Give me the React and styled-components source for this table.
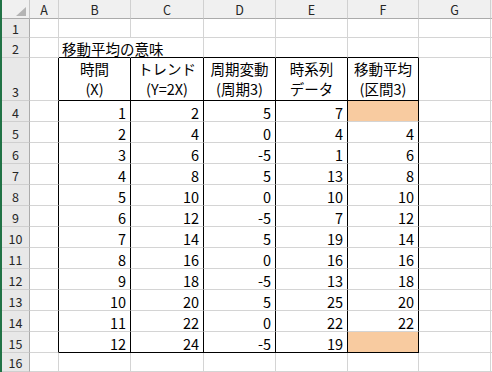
import React from "react";
import styled, { createGlobalStyle } from "styled-components";

const GlobalStyle = createGlobalStyle`
  html, body {
    margin: 0;
    padding: 0;
    background: #ffffff;
    overflow: hidden;
  }
  body {
    font-family: "Noto Sans CJK JP", "Noto Sans", sans-serif;
    color: #000000;
  }
`;

const GRID = "#d4d4d4";
const INK = "#000000";
const PEACH = "#f8cba0";

const COLUMNS = ["A", "B", "C", "D", "E", "F", "G", ""];
const COL_WIDTHS = [29, 72, 73, 72, 72, 71, 72, 60];
const ROW_HEIGHTS = [19, 20, 43, ...Array(12).fill(21), 19, 19];
const LAST_LABELLED_ROW = 16;

// B..F columns of the moving-average table
const heads = [
  ["時間", "(X)"],
  ["トレンド", "(Y=2X)"],
  ["周期変動", "(周期3)"],
  ["時系列", "データ"],
  ["移動平均", "(区間3)"],
];

const series = [7, 4, 1, 13, 10, 7, 19, 16, 13, 25, 22, 19];
const cycle = [5, 0, -5];
const data = series.map((y, i) => ({
  x: i + 1,
  trend: 2 * (i + 1),
  wave: cycle[i % 3],
  y,
  avg: i === 0 || i === series.length - 1 ? null : (series[i - 1] + y + series[i + 1]) / 3,
}));

const Window = styled.div`
  height: 372px;
  border-left: 2px solid #217346;
  overflow: hidden;
`;

const Sheet = styled.div`
  display: grid;
  grid-template-columns: 28px ${COL_WIDTHS.map((w) => `${w}px`).join(" ")};
  grid-template-rows: 19px ${ROW_HEIGHTS.map((h) => `${h}px`).join(" ")};
`;

const Corner = styled.div`
  position: relative;
  background: #f0f0f0;
  border-right: 1px solid #c6c6c6;
  border-bottom: 1px solid #ababab;

  &::after {
    content: "";
    position: absolute;
    right: 3px;
    bottom: 2px;
    width: 0;
    height: 0;
    border-left: 10px solid transparent;
    border-bottom: 9px solid #b4b4b4;
  }
`;

const ColHeader = styled.div`
  display: flex;
  align-items: center;
  justify-content: center;
  background: #f0f0f0;
  border-right: 1px solid #d0d0d0;
  border-bottom: 1px solid #ababab;
  font-size: 12.5px;
  color: #262626;
`;

const RowHeader = styled.div`
  display: flex;
  align-items: flex-end;
  justify-content: center;
  background: #e8e8e8;
  border-right: 1px solid #ababab;
  border-bottom: 1px solid #cfcfcf;
  font-size: 12.5px;
  line-height: 16px;
  color: #262626;
`;

const Cell = styled.div`
  box-sizing: border-box;
  min-width: 0;
  display: flex;
  align-items: flex-end;
  justify-content: ${(p) => (p.$align === "left" ? "flex-start" : "flex-end")};
  padding: 0 4px 0 3px;
  background: ${(p) => p.$fill || "transparent"};
  border-right: 1px solid ${(p) => p.$right || GRID};
  border-bottom: 1px solid ${(p) => p.$bottom || GRID};
  font-size: 14.5px;
  line-height: 16px;
  white-space: nowrap;
`;

const HeadCell = styled(Cell)`
  flex-direction: column;
  align-items: center;
  justify-content: center;
  padding: 0;
  line-height: 20px;
`;

function borders(row, col) {
  const inTable = row >= 3 && row <= 15;
  const tableCol = col >= 1 && col <= 5;
  let right = GRID;
  let bottom = GRID;
  if (inTable && (col === 0 || tableCol)) right = INK;
  if (tableCol && (row === 2 || row === 3 || row === 15)) bottom = INK;
  // title text runs past B2, so its right gridline is hidden
  if (row === 2 && col === 1) right = "transparent";
  return { right, bottom };
}

function cellContent(row, col) {
  if (row === 2 && col === 1) return { text: "移動平均の意味", align: "left" };
  if (row >= 4 && row <= 15 && col >= 1 && col <= 5) {
    const d = data[row - 4];
    const values = [d.x, d.trend, d.wave, d.y, d.avg];
    const v = values[col - 1];
    return { text: v === null ? "" : String(v), fill: v === null ? PEACH : null };
  }
  return { text: "" };
}

export default function App() {
  const rows = ROW_HEIGHTS.map((_, i) => i + 1);

  return (
    <Window>
      <GlobalStyle />
      <Sheet>
        <Corner />
        {COLUMNS.map((c, i) => (
          <ColHeader key={`h${i}`}>{c}</ColHeader>
        ))}

        {rows.map((row) => (
          <React.Fragment key={row}>
            <RowHeader>{row <= LAST_LABELLED_ROW ? row : ""}</RowHeader>
            {COLUMNS.map((_, col) => {
              const { right, bottom } = borders(row, col);
              if (row === 3 && col >= 1 && col <= 5) {
                const [top, sub] = heads[col - 1];
                return (
                  <HeadCell key={col} $right={right} $bottom={bottom}>
                    <span>{top}</span>
                    <span>{sub}</span>
                  </HeadCell>
                );
              }
              const { text, align, fill } = cellContent(row, col);
              return (
                <Cell key={col} $right={right} $bottom={bottom} $align={align} $fill={fill}>
                  {text}
                </Cell>
              );
            })}
          </React.Fragment>
        ))}
      </Sheet>
    </Window>
  );
}
